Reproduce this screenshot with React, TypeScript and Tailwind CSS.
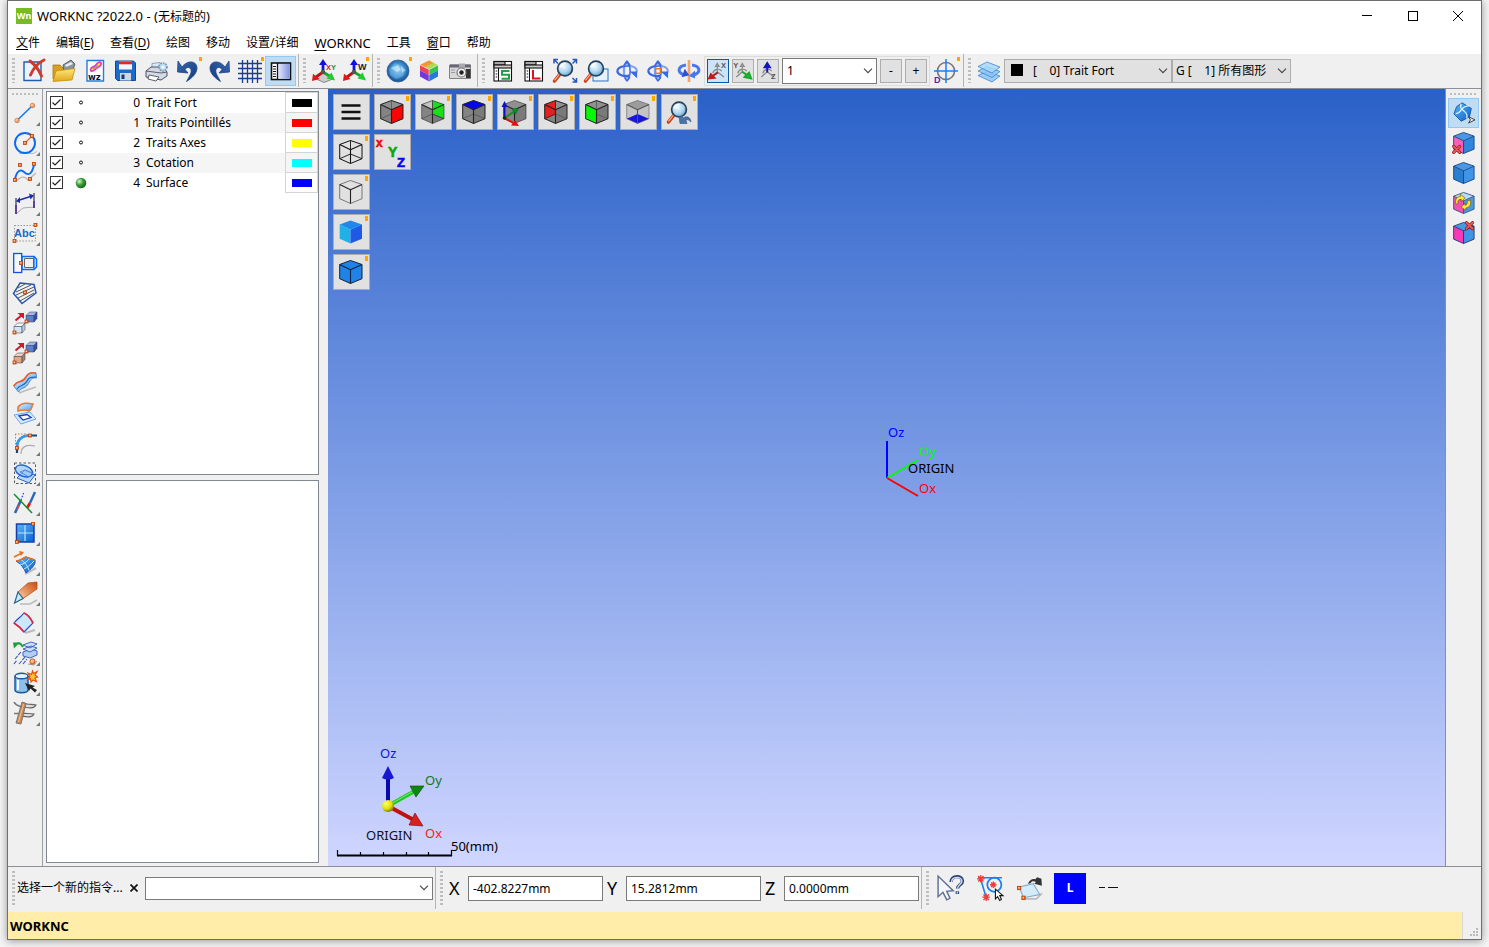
import React, { useState } from "react";

type Kids = { children?: React.ReactNode };

/* ---------- drawing helpers ---------- */

function Pic({ children, className = "size-6" }: Kids & { className?: string }) {
  return (
    <svg viewBox="0 0 24 24" className={`${className} shrink-0 overflow-visible`} fill="none" aria-hidden="true">
      {children}
    </svg>
  );
}

function Node({ x, y }: { x: number; y: number }) {
  return (
    <g>
      <rect x={x - 1.5} y={y - 1.5} width="3" height="3" fill="#f2671c" stroke="#b8440a" strokeWidth=".8" />
      <rect x={x - 0.8} y={y - 0.8} width="1.3" height="1.3" fill="#ffe0c0" />
    </g>
  );
}

function SharedPaints() {
  return (
    <svg className="absolute size-0" aria-hidden="true">
      <defs>
        <radialGradient id="lens" cx=".4" cy=".35" r=".7">
          <stop offset="0" stopColor="#f2fbff" />
          <stop offset=".6" stopColor="#a9d3ee" />
          <stop offset="1" stopColor="#5f97c4" />
        </radialGradient>
        <radialGradient id="globe" cx=".5" cy=".45" r=".6">
          <stop offset="0" stopColor="#a8d8f4" />
          <stop offset=".5" stopColor="#3f8fd0" />
          <stop offset="1" stopColor="#0c3c80" />
        </radialGradient>
        <linearGradient id="undo" x1="0" y1="0" x2="1" y2="1">
          <stop offset="0" stopColor="#3a68ac" />
          <stop offset="1" stopColor="#0f3a80" />
        </linearGradient>
        <linearGradient id="sky" x1="0" y1="0" x2="1" y2="1">
          <stop offset="0" stopColor="#e2f4ff" />
          <stop offset="1" stopColor="#4f9de4" />
        </linearGradient>
        <linearGradient id="deep" x1="0" y1="0" x2="1" y2="1">
          <stop offset="0" stopColor="#5ab8f5" />
          <stop offset="1" stopColor="#0f5fc8" />
        </linearGradient>
        <linearGradient id="gold" x1="0" y1="0" x2="0" y2="1">
          <stop offset="0" stopColor="#ffe680" />
          <stop offset="1" stopColor="#e0a91a" />
        </linearGradient>
        <linearGradient id="panel" x1="0" y1="0" x2="1" y2="0">
          <stop offset="0" stopColor="#e4eaff" />
          <stop offset="1" stopColor="#7f93e0" />
        </linearGradient>
        <linearGradient id="pencil" x1="0" y1="1" x2="1" y2="0">
          <stop offset="0" stopColor="#ffd0a8" />
          <stop offset="1" stopColor="#c8480c" />
        </linearGradient>
        <radialGradient id="ball" cx=".35" cy=".35" r=".7">
          <stop offset="0" stopColor="#d4f7cf" />
          <stop offset=".5" stopColor="#3a9c3a" />
          <stop offset="1" stopColor="#146414" />
        </radialGradient>
        <radialGradient id="yellowBall" cx=".35" cy=".3" r=".75">
          <stop offset="0" stopColor="#ffff70" />
          <stop offset=".6" stopColor="#e0e000" />
          <stop offset="1" stopColor="#707000" />
        </radialGradient>
        <radialGradient id="peach" cx=".35" cy=".35" r=".7">
          <stop offset="0" stopColor="#ffd8b8" />
          <stop offset="1" stopColor="#e07a38" />
        </radialGradient>
      </defs>
    </svg>
  );
}

const EDGE = {
  T: "11.5,.5",
  RT: "23,4.5",
  RB: "23,18.7",
  B: "11.5,23.5",
  LB: ".7,18.7",
  LT: ".7,4.5",
  C: "11.5,9.7",
  K: "11.5,14",
};

function Face({ p, fill, o = 1 }: { p: (keyof typeof EDGE)[]; fill: string; o?: number }) {
  return <polygon points={p.map((k) => EDGE[k]).join(" ")} fill={fill} fillOpacity={o} />;
}

function Wire({ color = "#222", hidden = false, soft = false }: { color?: string; hidden?: boolean; soft?: boolean }) {
  return (
    <g stroke={color} strokeWidth="1" strokeLinejoin="round">
      <path d="M11.5.5 23 4.5V18.7L11.5 23.5.7 18.7V4.5Z" strokeOpacity={soft ? 0.55 : 1} />
      <path d="M.7 4.5 11.5 9.7 23 4.5M11.5 9.7V23.5" strokeWidth="1.1" />
      {hidden && <path d="M11.5.5V14M.7 18.7 11.5 14 23 18.7" strokeWidth=".9" />}
    </g>
  );
}

const Magnifier = () => (
  <g>
    <path d="M7 15 1.5 22" stroke="#c8401c" strokeWidth="3.6" strokeLinecap="round" />
    <path d="M6.5 15 1.5 21.3" stroke="#ffb090" strokeWidth="1.2" />
    <circle cx="12" cy="9.5" r="7.4" fill="url(#lens)" stroke="#27405c" strokeWidth="1.7" />
    <path d="M7.5 8.5a5 5 0 0 1 5-4" stroke="#fff" strokeWidth="1.6" />
  </g>
);

const RedCross = ({ x, y }: { x: number; y: number }) => (
  <g strokeLinecap="round">
    <path d={`M${x - 3.3} ${y - 3.3}l6.6 6.6m0-6.6l-6.6 6.6`} stroke="#8c1a1a" strokeWidth="3.4" />
    <path d={`M${x - 3.3} ${y - 3.3}l6.6 6.6m0-6.6l-6.6 6.6`} stroke="#f05858" strokeWidth="2" />
  </g>
);

const Triad = () => (
  <g>
    <path d="M11 13V4" stroke="#1414d8" strokeWidth="2.8" />
    <path d="M7 6 11 0l4 6Z" fill="#1010e0" />
    <path d="M11 13 4 18" stroke="#c01414" strokeWidth="2.8" />
    <path d="M0 22 1 14.8 7.6 20Z" fill="#e01818" />
    <path d="M11 13l6.5 4" stroke="#18a828" strokeWidth="2.8" />
    <path d="M23 21.5 14.5 19.500 19.500 13.500Z" fill="#22cc30" />
    <circle cx="11" cy="13" r="2.2" fill="#555" />
  </g>
);

const Sheet = () => (
  <g>
    <rect x="3" y="2.5" width="17.5" height="19.5" fill="#fff" stroke="#111" strokeWidth="1.1" />
    <rect x="3" y="2.5" width="11" height="3.5" fill="#aaa" stroke="#111" strokeWidth="1.1" />
    <rect x="3" y="6" width="17.5" height="3" fill="#ccc" stroke="#111" strokeWidth="1.1" />
    <path d="M7.5 9V22" stroke="#111" />
    <path d="M4.700 12h1.500m-1.500 3h1.500m-1.500 3h1.500" stroke="#111" strokeWidth="1.200" />
  </g>
);

const Orbit = () => (
  <g>
    <path d="M12 1.500C7.500 6 7.500 18 12 22.500" stroke="#7ba2f4" strokeWidth="2.400" />
    <path d="M12 1.500C16.500 6 16.500 18 12 22.500" stroke="#4a74e8" strokeWidth="1.800" />
    <path d="M16 6.500C9 5.500 1.500 8 1.500 12s7 6.500 13 5" stroke="#3b68e0" strokeWidth="2.400" />
    <path d="M16 6.500c5 1 7.500 3.500 6.500 7" stroke="#7ba2f4" strokeWidth="2.200" />
    <path d="M8 5.500 12 0l4 5.500ZM15 12.500h8v7.500ZM8.500 19l3.500 5 4-5Z" fill="#3b68e0" />
    <path d="M12 3.500 9.500 6h4ZM12 21.500 10.500 19.500h3Z" fill="#9ab8fa" />
  </g>
);

const MiniAxis = ({ label, tone }: { label: string; tone: "x" | "y" | "z" }) => (
  <Pic className="size-[18px]">
    <g stroke="#888" strokeWidth="1.6">
      <path d="M11 13V4m0 9L3 20m8-7 9 7M5 15a7 7 0 0 1 12-3" />
      <path d="M8.500 6 11 2l2.500 4Z" fill="#aab" />
    </g>
    {tone === "x" && <path d="M12 14 6 18m1.500 3L0 22l2.500-6Z" stroke="#c01818" strokeWidth="2.4" fill="#d01818" />}
    {tone === "y" && <path d="M11 13l6 4m-3 3 9 2-3-8Z" stroke="#18a828" strokeWidth="2.4" fill="#18c828" />}
    {tone === "z" && <path d="M11 14V6M7.500 7 11 1.500 14.500 7Z" stroke="#1616c0" strokeWidth="2.6" fill="#1616c0" />}
    <text x={tone === "y" ? -1 : 16} y={tone === "z" ? 22 : 8} fontSize="10" fontWeight="700" fill="#555" fontFamily="Liberation Sans">
      {label}
    </text>
  </Pic>
);

const Undo = () => (
  <path
    d="M6 8C11 1 21 1 21 9.500 20.500 15 16 19 10.500 22.500 14 16 16.500 12.500 14.500 9.700 12.800 7.500 10.500 8.500 9 10.500L12 14 1.500 13 2 2Z"
    fill="url(#undo)"
    stroke="#1c4488"
    strokeWidth=".8"
    strokeLinejoin="round"
  />
);

const SmallBox = ({ x, y, a, b, c }: { x: number; y: number; a: string; b: string; c: string }) => (
  <g transform={`translate(${x} ${y})`} stroke="#3a3a50" strokeWidth=".5" strokeLinejoin="round">
    <path d="M0 4 3.500.5H11L8 4Z" fill={a} />
    <path d="M0 4h8v6.500H0Z" fill={b} />
    <path d="M8 4l3-3.500V7L8 10.500Z" fill={c} />
  </g>
);

/* ---------- main toolbar icons ---------- */

const fileIcons: { name: string; pic: React.ReactNode; mark?: boolean; on?: boolean }[] = [
  {
    name: "新建",
    pic: (
      <Pic>
        <path d="M3 3h17v18.500H3Z" fill="#e8f3ff" stroke="#1c5fb0" strokeWidth="1.400" />
        <path d="M9 2C13 5 18 11 20.500 17M23 1C17 4 12 10 9.500 16" stroke="#d03a28" strokeWidth="3" strokeLinecap="round" />
      </Pic>
    ),
  },
  {
    name: "打开",
    pic: (
      <Pic>
        <path d="M1 6h7l2 2.500h10V20H1Z" fill="#d8a020" stroke="#a87808" strokeWidth=".8" />
        <path d="M11 6 19 1l4 4-3 8-8 1Z" fill="#8a949c" stroke="#444c54" strokeWidth=".8" />
        <path d="M13 6l6-3 2 2-7 3Z" fill="#e8eef2" />
        <path d="M4 12 23 9.500 20 21 1 22.500Z" fill="url(#gold)" stroke="#c89010" strokeWidth=".8" />
      </Pic>
    ),
  },
  {
    name: "工作区",
    pic: (
      <Pic>
        <path d="M4 1.500h16.500V22H4Z" fill="#fff" stroke="#2a7ccc" strokeWidth="1.400" />
        <path d="M8 12C6 8 12 8 13 6s4-4 5-2-2 4-4 5-3 4-6 3Z" fill="#f4e838" stroke="#e040c0" strokeWidth="1.800" />
        <path d="M10 10l5-4" stroke="#999" strokeWidth="1.200" />
        <text x="5" y="20.500" fontSize="8.500" fontWeight="700" fill="#101030" fontFamily="DejaVu Sans">
          wz
        </text>
      </Pic>
    ),
  },
  {
    name: "保存",
    pic: (
      <Pic>
        <path d="M1.500 2h18l2 2v17.500h-18l-2-2Z" fill="#1d6ac8" stroke="#0e4a9c" />
        <path d="M5 2.500h13v8H5Z" fill="#f2f6fa" />
        <path d="M5 2.500h13v2.800H5Z" fill="#e02c20" />
        <path d="M6 14h11v7.500H6Z" fill="#cfd8e2" />
        <path d="M7.500 15.500h3V20h-3Z" fill="#123a78" />
      </Pic>
    ),
  },
  {
    name: "打印",
    pic: (
      <Pic>
        <path d="M7 9V4.500l8-1 1 6Z" fill="#d4ecff" stroke="#7890a8" strokeWidth=".8" />
        <path d="M1 12l5-4h12l4 5v4l-6 4-15-3Z" fill="#d4d9e4" stroke="#4a5064" strokeWidth="1" />
        <path d="M1 12l15 2 6-1" stroke="#4a5064" strokeWidth=".9" />
        <path d="M4 16l10 2-3 4-8-2Z" fill="#fff" stroke="#4a5064" strokeWidth=".9" />
        <circle cx="18" cy="8" r="4" fill="#b8dcf4" stroke="#8094a8" strokeWidth="1.700" strokeDasharray="1.600 1" />
        <circle cx="18" cy="8" r="1.500" fill="#fff" />
      </Pic>
    ),
  },
  { name: "撤销", mark: true, pic: <Pic><Undo /></Pic> },
  {
    name: "重做",
    pic: (
      <Pic>
        <g transform="translate(24 0) scale(-1 1)">
          <Undo />
        </g>
      </Pic>
    ),
  },
  {
    name: "网格",
    mark: true,
    pic: (
      <Pic>
        <path d="M4.500 1v23M9.500 1v23M14.500 1v23M19.500 1v23M0 4.500h24M0 9.500h24M0 14.500h24M0 19.500h24" stroke="#1c3c8c" strokeWidth="1.300" />
      </Pic>
    ),
  },
  {
    name: "面板",
    on: true,
    pic: (
      <Pic>
        <rect x="2.500" y="4" width="19" height="16.500" fill="#fff" stroke="#111" strokeWidth="1.600" />
        <rect x="9" y="5" width="11.700" height="14.700" fill="url(#panel)" />
        <path d="M8.500 4v16.500" stroke="#111" strokeWidth="1.300" />
        <path d="M4 7.500h3M4 10h3M4 12.500h3M4 15h3M4 17.500h3" stroke="#111" strokeWidth="1.100" />
      </Pic>
    ),
  },
];

const axisIcons = [
  {
    name: "XY 平面",
    pic: (
      <Pic>
        <path d="M11 14 2 19l10 4.500 10-4Z" fill="#ccc" stroke="#666" strokeWidth=".7" />
        <Triad />
        <text x="14" y="10.500" fontSize="7.500" fontWeight="700" fontFamily="Liberation Sans" fill="#c82020">
          X<tspan fill="#1a9030">Y</tspan>
        </text>
      </Pic>
    ),
  },
  {
    name: "工作坐标系",
    mark: true,
    pic: (
      <Pic>
        <Triad />
        <text x="15" y="10.500" fontSize="9" fontWeight="700" fontFamily="Liberation Sans" fill="#222">
          W
        </text>
      </Pic>
    ),
  },
];

const displayIcons = [
  {
    name: "渲染",
    mark: true,
    pic: (
      <Pic>
        <circle cx="12" cy="12" r="11" fill="url(#globe)" stroke="#3a6a94" strokeWidth=".8" />
        <path d="M3 10l6-6 5 2 6 5-3 6-7 3-6-4Z" fill="#7cc0ec" fillOpacity=".45" />
        <path d="M5 9l7-3 3 5-4 2ZM15 7l4 4-3 3Z" fill="#d4effc" fillOpacity=".65" />
      </Pic>
    ),
  },
  {
    name: "颜色",
    pic: (
      <Pic>
        <path d="M12 1.500 21 6 12 10.500 3 6Z" fill="#b8d84c" />
        <path d="M12 1.500 16.500 3.700 7.500 8.200 3 6Z" fill="#f09838" />
        <path d="M3 6l9 4.500V16L3 11.500Z" fill="#f04058" />
        <path d="M3 11.500 12 16v6.500L3 17.500Z" fill="#7038d8" />
        <path d="M12 10.500 21 6v5.500L12 16Z" fill="#30c850" />
        <path d="M12 16l9-4.500v6l-9 5Z" fill="#2878d8" />
        <path d="M3 6l9 4.500L21 6M12 10.500v12" stroke="#fff" strokeOpacity=".6" strokeWidth=".8" />
      </Pic>
    ),
  },
  {
    name: "截图",
    pic: (
      <Pic>
        <path d="M1.500 6h21v13.500h-21Z" fill="#d8d8d8" stroke="#777" strokeWidth=".9" />
        <path d="M2 5.500h20.500v3H2Z" fill="#667" />
        <path d="M11 4.500h6v4h-6Z" fill="#aaa" />
        <path d="M18 10h4.500v9H18Z" fill="#333" />
        <circle cx="13.500" cy="13.500" r="4.500" fill="#f0f0f0" stroke="#777" strokeWidth="1.200" />
        <circle cx="13.500" cy="13.500" r="2.200" fill="#222" />
        <path d="M3 11h4M3 13.500h4" stroke="#999" />
      </Pic>
    ),
  },
];

const viewIcons = [
  {
    name: "S 列表",
    pic: (
      <Pic>
        <Sheet />
        <path d="M18.500 12H11v3.700h7v4h-7.500" stroke="#20a048" strokeWidth="2" />
      </Pic>
    ),
  },
  {
    name: "L 列表",
    pic: (
      <Pic>
        <Sheet />
        <path d="M11 11v8.500h7.500" stroke="#e01020" strokeWidth="2" />
      </Pic>
    ),
  },
  {
    name: "全部缩放",
    pic: (
      <Pic>
        <Magnifier />
        <path d="M5 4.500 1 .5m0 4V.5h4M19.500 4.500l4-4m-4 0h4v4M19.500 19l4 4m-4 0h4v-4" stroke="#2858b8" strokeWidth="1.500" />
      </Pic>
    ),
  },
  {
    name: "窗口缩放",
    pic: (
      <Pic>
        <rect x="9" y="10" width="15" height="12" fill="#e4f2ff" stroke="#2c70c4" />
        <Magnifier />
      </Pic>
    ),
  },
  { name: "旋转", pic: <Pic className="size-[22px]"><Orbit /></Pic> },
  {
    name: "绕点旋转",
    pic: (
      <Pic className="size-[22px]">
        <Orbit />
        <rect x="9.500" y="9.500" width="5" height="5" fill="#fff" stroke="#f07818" strokeWidth="1.600" />
      </Pic>
    ),
  },
  {
    name: "绕轴旋转",
    pic: (
      <Pic>
        <path d="M12 1v22" stroke="#f4a468" strokeWidth="2.600" />
        <path d="M9 6C1 7 0 13 6 15.500M15 6c8 1 9 7 3 9.500l-4 1" stroke="#4a78ec" strokeWidth="3" />
        <path d="M6 10.500v9l6.500-4.500Z" fill="#2c50d0" transform="rotate(20 9 15)" />
        <path d="M18 11.500v8l-6-2.500Z" fill="#4a78ec" />
      </Pic>
    ),
  },
];

/* ---------- drawing palette (left) ---------- */

const drawTools: { name: string; art: React.ReactNode }[] = [
  {
    name: "直线",
    art: (
      <>
        <path d="M4 19.500 19.500 4.500" stroke="#1a78f0" strokeWidth="1.600" />
        <circle cx="4" cy="19.500" r="2.300" fill="url(#peach)" stroke="#c8703c" strokeWidth=".6" />
        <circle cx="19.500" cy="4.500" r="2.300" fill="url(#peach)" stroke="#c8703c" strokeWidth=".6" />
      </>
    ),
  },
  {
    name: "圆",
    art: (
      <>
        <path d="M6 22.500h14l4-2" stroke="#bbb" />
        <circle cx="12" cy="12" r="10" stroke="#0a6af0" strokeWidth="1.900" />
        <path d="M12 12l7-7" stroke="#e07030" strokeWidth="1.200" />
        <Node x={12} y={12} />
        <Node x={19} y={5} />
      </>
    ),
  },
  {
    name: "样条",
    art: (
      <>
        <path d="M3 20c6-5 9-5 12-1l8-7" stroke="#b8b8b8" strokeWidth="1.400" />
        <path d="M2 18C4 9 8 8 11 11s6 3 8-1 2-4 2-7" stroke="#0a6af0" strokeWidth="1.900" />
        <Node x={7} y={4} />
        <Node x={21} y={3} />
        <Node x={2} y={19} />
        <Node x={17} y={18} />
      </>
    ),
  },
  {
    name: "尺寸",
    art: (
      <>
        <path d="M3 23l7-6 11-1" stroke="#aaa" />
        <path d="M3 7v7M21 2v8" stroke="#444" strokeWidth="1.300" />
        <path d="M3 14v9M21 10v7" stroke="#4a2090" strokeWidth="1.700" />
        <path d="M5 9.500 19 5" stroke="#1c2cb0" strokeWidth="1.500" />
        <path d="M3 10.200 7 6v6ZM21 4.500 16 2.500l1.500 6Z" fill="#1c2cb0" />
      </>
    ),
  },
  {
    name: "文字",
    art: (
      <>
        <rect x="1.500" y="4.500" width="21" height="15.500" stroke="#999" strokeDasharray="1.500 1.500" />
        <text x="1" y="16" fontSize="11" fontWeight="700" fill="#1668c8" fontFamily="Liberation Sans">
          Abc
        </text>
        <Node x={22.500} y={4} />
        <Node x={1.500} y={20} />
      </>
    ),
  },
  {
    name: "轮廓",
    art: (
      <>
        <rect x=".7" y="2.500" width="8" height="19" fill="#f4f8ff" stroke="#0a54e0" strokeWidth="1.300" />
        <path d="M9 5.500h12l2.500 2.500v8l-2.500 2.500H9Z" stroke="#0a6af0" strokeWidth="1.500" />
        <path d="M11.500 7.500h9v9h-9Z" stroke="#666" />
        <path d="M21 5.500v13" stroke="#0a6af0" strokeWidth="1.300" />
        <Node x={8} y={12} />
      </>
    ),
  },
  {
    name: "剖面线",
    art: (
      <>
        <path d="M7 2l14 1.500 2 8.500L9 22.500.5 12.500Z" fill="#f2f2f2" stroke="#2458b8" strokeWidth="1.500" />
        <path d="M5 7 12 3M3 11 18 4M3 14l18-8M5 17l16-8M7 20l14-8" stroke="#444" strokeWidth=".9" />
        <Node x={12} y={11.500} />
      </>
    ),
  },
  {
    name: "移动",
    art: (
      <>
        <path d="M2.500 9.500 9 4" stroke="#c81c30" strokeWidth="2.200" />
        <path d="M4.500 2H11v6Z" fill="#c81c30" />
        <SmallBox x={13} y={.5} a="#a0b8ec" b="#5a80d0" c="#3050a8" />
        <SmallBox x={1} y={11.500} a="#eef4fa" b="#d4e4f2" c="#c0c8d4" />
        <Node x={13.500} y={10.500} />
        <Node x={1.500} y={21.500} />
      </>
    ),
  },
  {
    name: "复制",
    art: (
      <>
        <path d="M2.500 9.500 9 4" stroke="#c81c30" strokeWidth="2.200" />
        <path d="M4.500 2H11v6Z" fill="#c81c30" />
        <SmallBox x={13} y={.5} a="#a0b8ec" b="#5a80d0" c="#3050a8" />
        <SmallBox x={1} y={11.500} a="#f4d0b8" b="#dca888" c="#a88068" />
        <Node x={13.500} y={10.500} />
        <Node x={1.500} y={21.500} />
      </>
    ),
  },
  {
    name: "放样面",
    art: (
      <>
        <path d="M6 22l8-3 9-3" stroke="#bbb" strokeWidth="1.500" />
        <path d="M.7 15C5 8 9 13 13 6c2-4 5-5 10-4l.5 5c-6-1-6 3-9 7s-6 2-9 7Z" fill="url(#sky)" stroke="#2478cc" strokeWidth=".8" />
        <path d="M.7 15C5 8 9 13 13 6c2-4 5-5 10-4" stroke="#e8602c" strokeWidth="1.600" />
        <path d="M4 18c3-5 7-2 10-8 2-4 4-4 9-4" stroke="#1c5fb8" strokeWidth="1.200" />
      </>
    ),
  },
  {
    name: "偏置",
    art: (
      <>
        <path d="M1 14l16-3 6 7-15 5Z" fill="#d4ebff" stroke="#6aa8e0" />
        <path d="M6 15l8-1.500 4 3L10 19Z" fill="#fff" stroke="#1c3cc0" strokeWidth="1.300" />
        <path d="M5 6c4-5 10-4 15-3-2 4-1 6-4 7-4-2-7-1-11 0Z" fill="url(#sky)" stroke="#e87830" strokeWidth="1.600" />
      </>
    ),
  },
  {
    name: "圆角",
    art: (
      <>
        <path d="M2 3h12M2.500 3v13" stroke="#e87830" strokeWidth="1" strokeDasharray="1.500 1.500" />
        <path d="M8 23c0-7 5-10 14-8" stroke="#aaa" strokeWidth="1.200" />
        <path d="M4 22v-6C4 9 9 4.500 16 4.500h8" stroke="#164878" strokeWidth="2.200" />
        <path d="M4 16C4 9 9 4.500 16 4.500" stroke="#3a98ec" strokeWidth="2.400" />
        <Node x={17} y={4.500} />
        <Node x={4} y={17} />
      </>
    ),
  },
  {
    name: "选择区域",
    art: (
      <>
        <rect x="1.500" y="2" width="21" height="20.500" stroke="#555" strokeDasharray="2.500 2" />
        <path d="M4 17l8-8 10 5-6 8Z" fill="#b8daf4" stroke="#2860c8" />
        <ellipse cx="11" cy="10" rx="9" ry="5.500" transform="rotate(20 11 10)" fill="#8cc4f0" fillOpacity=".6" stroke="#2060d0" strokeWidth="1.400" />
        <path d="M7 11l5-2 8 3-4 4Z" stroke="#4078d0" strokeWidth=".8" />
      </>
    ),
  },
  {
    name: "修剪",
    art: (
      <>
        <path d="M2 22 8 9" stroke="#2868b8" strokeWidth="2.600" />
        <path d="M8 9l3-8" stroke="#2840f0" strokeDasharray="1.500 1.500" strokeWidth="1.200" />
        <path d="M4 19l2-5" stroke="#e04848" strokeWidth="1.500" />
        <path d="M14 17l3-5" stroke="#e01818" strokeWidth="2.800" />
        <path d="M17 12l5-11" stroke="#2868b8" strokeWidth="2.400" />
        <path d="M1 3l18 19" stroke="#18902c" strokeWidth="1.500" />
      </>
    ),
  },
  {
    name: "曲面",
    art: (
      <>
        <rect x="3.500" y="3" width="17.500" height="18" fill="url(#deep)" stroke="#1840a8" strokeWidth="1.500" />
        <path d="M12 4v16M5 12h15" stroke="#b8e4ff" strokeWidth="1.200" />
        <Node x={20} y={3} />
        <Node x={4} y={21} />
      </>
    ),
  },
  {
    name: "拉伸面",
    art: (
      <>
        <path d="M12 23l11-6" stroke="#bbb" strokeWidth="2" />
        <path d="M3 10c4 0 7-3 10-4l9 3c1 5-4 9-9 13-2-5-5-9-10-12Z" fill="url(#deep)" stroke="#1850b0" />
        <path d="M8 8.500c4 3 7 7 8 11M7 14c4-1 8-4 10-7M11 18c4-2 7-5 10-8" stroke="#c0e6ff" />
        <path d="M1 6 8 2.500M3 10c4 0 7-3 10-4l9 3" stroke="#e87020" strokeWidth="1.600" />
        <path d="M6 0l5 1-3 4Z" fill="#e87020" />
      </>
    ),
  },
  {
    name: "铣削",
    art: (
      <>
        <path d="M7 23h10l7-4" stroke="#bbb" strokeWidth="1.500" />
        <path d="M5 11 15 2l9-1v7L10 17.500Z" fill="url(#pencil)" stroke="#b85018" strokeWidth=".8" />
        <path d="M5 11l5 6.500L1.500 22Z" fill="#c4ecf8" stroke="#2c6488" strokeWidth="1.200" />
      </>
    ),
  },
  {
    name: "补面",
    art: (
      <>
        <path d="M12 22l10-3" stroke="#bbb" strokeWidth="2" />
        <path d="M11 2c5 2 7 6 9 10l-9 9C8 17 4 14 1 12 4 8 8 6 11 2Z" fill="#cde8fb" stroke="#1c50d0" strokeWidth="1.200" />
        <path d="M11 2c5 2 7 6 9 10M1 12c3 2 7 5 10 9" stroke="#e02840" strokeWidth="1.700" />
      </>
    ),
  },
  {
    name: "转换图层",
    art: (
      <>
        <path d="M2 18l6-7M1 23l3-4m2 4 7-8m-3 8 4-5" stroke="#3858c8" strokeWidth="1.100" strokeDasharray="4 1" />
        <path d="M10 11l8-3 6 2v4l-7 3-7-2Z" fill="#b4ccf4" stroke="#3058c0" strokeWidth=".9" />
        <path d="M10 8l8-3 6 2-7 4ZM10 4l8-3 6 2-7 4Z" fill="#cfe0fc" stroke="#3058c0" strokeWidth=".9" />
        <path d="M10 6C7 1 5 2 4 3" stroke="#18a038" strokeWidth="2" />
        <path d="M0 1.500 6.500 1.500 1 7.500Z" fill="#18a038" />
        <path d="M15 23l6 1 3-4" stroke="#999" />
        <circle cx="19.500" cy="20.500" r="2.600" fill="url(#peach)" stroke="#c85c18" />
      </>
    ),
  },
  {
    name: "实体",
    art: (
      <>
        <path d="M2 5v14c0 3.500 13 3.500 13 0V5" fill="#8cc0ec" stroke="#1c5898" strokeWidth="1.500" />
        <ellipse cx="8.500" cy="5" rx="6.500" ry="2.700" fill="#e2f4ff" stroke="#1c5898" strokeWidth="1.400" />
        <path d="M5 9v10" stroke="#fff" strokeWidth="1.800" />
        <path d="M19.500 0l1 2.500L24 .5 22 4l2.500 2L22 7l1.500 3.500L20 9l-2 2-.5-3-3 .5L17 6l-2-4 3.500 1.500Z" fill="#f8c830" stroke="#e85010" strokeWidth="1.200" />
        <path d="M12 12l10 3-2.500 1.500L24 19l-2 2.500-4.500-4L16 20Z" fill="#222" />
      </>
    ),
  },
  {
    name: "测量",
    art: (
      <>
        <path d="M11 2c3 2 8 1 12 2-2 4-7 3-12 2M9 12c4 1 8 0 12 1-2 4-7 3-13 2" fill="#ddd" stroke="#666" strokeWidth="1.200" />
        <path d="M9 1l4 1.500-5 20.500-5-1Z" fill="#c88858" stroke="#666" strokeWidth=".8" />
        <path d="M10.500 3 5.500 21" stroke="#f4c898" />
        <path d="M1 1c2 4 5 4 8 5M1 12.500h5" stroke="#777" strokeWidth="1.600" />
      </>
    ),
  },
];

const faceTools = [
  {
    name: "选择曲面",
    on: true,
    art: (
      <>
        <path d="M10 1 20 7l-2 9-9 5L1 13l3-8Z" fill="url(#deep)" stroke="#1458a8" />
        <path d="M3 13c8-1 3-8 15-9M9 2c-4 8 9 7 6 16" stroke="#d8f2ff" strokeWidth="1.500" />
        <path d="M17 16l7 3.500-7 3.500 2-3.500Z" fill="#eee" stroke="#333" />
      </>
    ),
  },
  {
    name: "删除面",
    art: (
      <>
        <Face p={["T", "RT", "C", "LT"]} fill="#4a98e4" />
        <Face p={["LT", "C", "B", "LB"]} fill="#f860b8" />
        <Face p={["C", "RT", "RB", "B"]} fill="#2f86dc" />
        <Wire color="#1c4888" />
        <RedCross x={4} y={19} />
      </>
    ),
  },
  {
    name: "实体面",
    art: (
      <>
        <Face p={["T", "RT", "C", "LT"]} fill="#4a98e4" />
        <Face p={["LT", "C", "B", "LB"]} fill="#2a7ed0" />
        <Face p={["C", "RT", "RB", "B"]} fill="#3f94e6" />
        <Wire color="#1c4888" />
      </>
    ),
  },
  {
    name: "翻转面",
    art: (
      <>
        <Face p={["T", "RT", "C", "LT"]} fill="#b8dcf8" />
        <Face p={["LT", "C", "B", "LB"]} fill="#f050b0" />
        <Face p={["C", "RT", "RB", "B"]} fill="#4a98e4" />
        <Wire color="#385888" />
        <g stroke="#6c5800" strokeWidth=".7" fill="#ffe838">
          <path d="M3 13c-1-6 2-8 5-8V2.500l5 4-4 4V8c-3 0-4 1-3.500 5Z" />
          <path d="M19 9c1 5-1 8-5 8.500V20l-5-3.500 4-4.500v2.500c2 0 3-2 2.500-5Z" />
        </g>
      </>
    ),
  },
  {
    name: "移除颜色",
    art: (
      <>
        <Face p={["T", "RT", "C", "LT"]} fill="#4a98e4" />
        <Face p={["LT", "C", "B", "LB"]} fill="#f838b8" />
        <Face p={["C", "RT", "RB", "B"]} fill="#3f94e6" />
        <Wire color="#1c4070" />
        <RedCross x={18} y={4} />
      </>
    ),
  },
];

/* ---------- floating view buttons ---------- */

const GrayCube = ({ hidden = true }: { hidden?: boolean }) => (
  <>
    <Face p={["T", "RT", "C", "LT"]} fill="#909090" />
    <Face p={["LT", "C", "B", "LB"]} fill="#848484" />
    <Face p={["C", "RT", "RB", "B"]} fill="#7a7a7a" />
    {hidden && <path d="M11.500.5V14M.7 18.700 11.500 14 23 18.700" stroke="#555" strokeWidth=".8" />}
  </>
);

const viewRow = [
  {
    name: "菜单",
    mark: false,
    art: <path d="M2.500 5.500h19M2.500 12h19M2.500 18.500h19" stroke="#111" strokeWidth="2.600" />,
  },
  { name: "右视图", mark: true, art: <><GrayCube /><Face p={["C", "RT", "RB", "B"]} fill="#fa0505" /><Wire /></> },
  {
    name: "后视图",
    mark: true,
    art: (
      <>
        <GrayCube />
        <Face p={["T", "C", "LT"]} fill="#c4c4c4" />
        <Face p={["T", "RT", "RB", "K"]} fill="#18e018" />
        <Wire soft />
        <path d="M11.500.5V14L23 18.700" stroke="#333" strokeWidth=".8" />
      </>
    ),
  },
  { name: "俯视图", mark: true, art: <><GrayCube /><Face p={["T", "RT", "C", "LT"]} fill="#0505f0" /><Wire /></> },
  {
    name: "等轴测",
    mark: true,
    art: (
      <>
        <GrayCube hidden={false} />
        <Wire soft />
        <path d="M1.500 18V5" stroke="#1010d0" strokeWidth="2" />
        <path d="M-1.500 7 1.500 1l3 6Z" fill="#1010d0" />
        <path d="M1.500 18 12 11" stroke="#109018" strokeWidth="2" />
        <path d="M15.500 8.500 12.500 14 9 9Z" fill="#109018" stroke="#063" strokeWidth=".6" />
        <path d="M1.500 18l9 5" stroke="#e01010" strokeWidth="2" />
        <path d="M16 26l-8-.5 4-5.500Z" fill="#e01010" />
        <circle cx="1.500" cy="18" r="1.800" fill="#222" />
      </>
    ),
  },
  {
    name: "左视图",
    mark: true,
    art: <><GrayCube /><Face p={["T", "K", "LB", "LT"]} fill="#ee1515" o={0.9} /><Wire /><path d="M11.500.5V14L.7 18.700" stroke="#511" strokeWidth=".8" /></>,
  },
  { name: "前视图", mark: true, art: <><GrayCube /><Face p={["LT", "C", "B", "LB"]} fill="#05f805" /><Wire /></> },
  {
    name: "仰视图",
    mark: true,
    art: (
      <>
        <Face p={["T", "RT", "RB", "B", "LB", "LT"]} fill="#c4c4c4" />
        <Face p={["T", "RT", "C", "LT"]} fill="#9c9c9c" />
        <Face p={["K", "RB", "B", "LB"]} fill="#1515e0" />
        <Wire color="#555" soft />
      </>
    ),
  },
  {
    name: "上一视图",
    mark: true,
    art: (
      <>
        <Magnifier />
        <path d="M12 16.500h3l1.500 1.500c3-2.500 7-1 7.500 4-3-3-4-2.500-5-1.500l1 3h-7Z" fill="#4a74a8" stroke="#2c5488" strokeWidth=".6" />
      </>
    ),
  },
];

const styleRows = [
  { name: "线框", art: <Wire hidden color="#111" /> },
  { name: "消隐", art: <Wire soft color="#222" /> },
  {
    name: "着色",
    art: (
      <>
        <Face p={["T", "RT", "C", "LT"]} fill="#2088e8" />
        <Face p={["LT", "C", "B", "LB"]} fill="#20b0e8" />
        <Face p={["C", "RT", "RB", "B"]} fill="#2058e8" />
      </>
    ),
  },
  {
    name: "着色带边",
    art: (
      <>
        <Face p={["T", "RT", "RB", "B", "LB", "LT"]} fill="#2082e6" />
        <Wire color="#0c2440" />
      </>
    ),
  },
];

/* ---------- controls ---------- */

function Grip({ vertical = true }: { vertical?: boolean }) {
  return vertical ? (
    <span className="w-[9px] shrink-0 self-stretch py-1 pl-1">
      <span className="block h-full w-[3px] bg-[repeating-linear-gradient(to_bottom,#bdbdbd_0px,#bdbdbd_2px,transparent_2px,transparent_4px)]" />
    </span>
  ) : (
    <span className="flex h-[9px] w-full shrink-0 items-center justify-center">
      <span className="h-[2px] w-[27px] bg-[repeating-linear-gradient(to_right,#bdbdbd_0px,#bdbdbd_2px,transparent_2px,transparent_4px)]" />
    </span>
  );
}

const Mark = () => <span className="absolute top-[1px] right-[1px] h-[5px] w-[3px] bg-[#ffa500]" />;

function ToolButton({ name, children, mark, on }: Kids & { name: string; mark?: boolean; on?: boolean }) {
  return (
    <button
      aria-label={name}
      className={`relative flex h-[30px] w-[31px] shrink-0 items-center justify-center border ${
        on ? "border-[#90c8f6] bg-[#c0dcf3]" : "border-transparent hover:bg-[#e5f1fb]"
      }`}
    >
      {children}
      {mark && <span className="absolute top-0 right-0 h-1 w-[3px] bg-[#ffa500]" />}
    </button>
  );
}

function Group({ children, last }: Kids & { last?: boolean }) {
  return (
    <div role="toolbar" className={`flex shrink-0 items-center ${last ? "" : "border-r border-[#b4b4b4] pr-[2px]"}`}>
      <Grip />
      {children}
    </div>
  );
}

const Chevron = () => (
  <svg viewBox="0 0 10 6" className="pointer-events-none absolute top-1/2 right-1 h-[6px] w-[10px] -translate-y-1/2" fill="none" aria-hidden="true">
    <path d="M1 .7 5 4.700 9 .7" stroke="#444" strokeWidth="1.100" />
  </svg>
);

function Picker({ label, options, look, swatch }: { label: string; options: string[]; look: string; swatch?: boolean }) {
  return (
    <div className="relative shrink-0">
      <select aria-label={label} className={`block appearance-none border text-black outline-none ${look}`}>
        {options.map((o) => (
          <option key={o}>{o}</option>
        ))}
      </select>
      {swatch && <span className="pointer-events-none absolute top-[5px] left-[7px] size-3 bg-black" />}
      <Chevron />
    </div>
  );
}

const AxisToggle = ({ label, tone, on }: { label: string; tone: "x" | "y" | "z"; on?: boolean }) => (
  <button
    aria-label={`${label} 轴`}
    className={`flex h-6 w-[22px] items-center justify-center border ${on ? "border-[#0a5a9c] bg-[#cce4f7]" : "border-[#adadad] bg-[#e1e1e1]"}`}
  >
    <MiniAxis label={label} tone={tone} />
  </button>
);

const StepButton = ({ sign }: { sign: string }) => (
  <button className="flex h-6 w-[22px] items-center justify-center border border-[#adadad] bg-[#e1e1e1]">{sign}</button>
);

function TitleBar() {
  return (
    <header className="flex h-[30px] shrink-0 items-center bg-white pl-2">
      <span className="flex size-4 items-center justify-center bg-[#78bc1e] text-[9px] font-bold text-white">Wn</span>
      <h1 className="ml-[5px] flex-1">
        <span className="text-[13px]">WORKNC ?2022.0 - (</span>无标题的<span className="text-[13px]">)</span>
      </h1>
      <button aria-label="最小化" className="flex h-full w-[46px] items-center justify-center">
        <svg viewBox="0 0 10 10" className="size-[10px]" aria-hidden="true"><path d="M0 4.500h10" stroke="#000" /></svg>
      </button>
      <button aria-label="最大化" className="flex h-full w-[45px] items-center justify-center">
        <svg viewBox="0 0 10 10" className="size-[10px]" aria-hidden="true"><rect x=".5" y=".5" width="9" height="9" fill="none" stroke="#000" /></svg>
      </button>
      <button aria-label="关闭" className="flex h-full w-[46px] items-center justify-center">
        <svg viewBox="0 0 10 10" className="size-[10px]" aria-hidden="true"><path d="M0 0l10 10M10 0 0 10" stroke="#000" /></svg>
      </button>
    </header>
  );
}

function MenuBar() {
  return (
    <nav className="flex h-[23px] shrink-0 items-center gap-4 bg-white px-2 [&_u]:underline-offset-2">
      <button><u>文</u>件</button>
      <button>编辑(<u>E</u>)</button>
      <button>查看(<u>D</u>)</button>
      <button>绘图</button>
      <button>移动</button>
      <button>设置/详细</button>
      <button className="text-[13px]"><u>W</u>ORKNC</button>
      <button>工具</button>
      <button><u>窗</u>口</button>
      <button>帮助</button>
    </nav>
  );
}

function MainToolbar() {
  return (
    <div className="flex h-[34px] shrink-0 bg-[#f0f0f0] pb-px">
      <Group>
        {fileIcons.map((i) => (
          <ToolButton key={i.name} name={i.name} mark={i.mark} on={i.on}>{i.pic}</ToolButton>
        ))}
      </Group>
      <Group>
        {axisIcons.map((i) => (
          <ToolButton key={i.name} name={i.name} mark={i.mark}>{i.pic}</ToolButton>
        ))}
      </Group>
      <Group>
        {displayIcons.map((i) => (
          <ToolButton key={i.name} name={i.name} mark={i.mark}>{i.pic}</ToolButton>
        ))}
      </Group>
      <Group>
        {viewIcons.map((i) => (
          <ToolButton key={i.name} name={i.name}>{i.pic}</ToolButton>
        ))}
        <div className="flex items-center gap-[3px] border border-[#dcdcdc] px-[2px] py-px">
          <AxisToggle label="X" tone="x" on />
          <AxisToggle label="Y" tone="y" />
          <AxisToggle label="Z" tone="z" />
          <Picker label="步长" options={["1", "5", "10"]} look="h-[26px] w-[95px] border-[#7a7a7a] bg-white pl-1" />
          <StepButton sign="-" />
          <StepButton sign="+" />
        </div>
        <ToolButton name="目标" mark>
          <Pic>
            <circle cx="12" cy="12" r="8.500" stroke="#777" strokeWidth="1.600" />
            <path d="M12 0v24M0 12h24" stroke="#1a80f8" strokeWidth="1.500" />
            <text x="0" y="23.500" fontSize="9" fontWeight="700" fill="#6020a8" fontFamily="Liberation Sans">D</text>
          </Pic>
        </ToolButton>
      </Group>
      <Group last>
        <ToolButton name="图层">
          <Pic>
            <g fill="#8cc4f4" stroke="#3c88d0" strokeWidth=".8" fillOpacity=".85">
              <path d="M1 16.500 10 12l13 5-8 6Z" />
              <path d="M1 12 10 7.500l13 5-8 6Z" />
              <path d="M1 7.500 10 3l13 5-8 6Z" fill="#a8d8fa" />
            </g>
          </Pic>
        </ToolButton>
        <Picker
          label="当前图层"
          options={["[\u00a0\u00a0\u00a0 0] Trait Fort", "[\u00a0\u00a0\u00a0 4] Surface"]}
          look="h-6 w-[168px] border-[#adadad] bg-[#e1e1e1] pl-7"
          swatch
        />
        <Picker
          label="图形组"
          options={["G [\u00a0\u00a0\u00a0 1] 所有图形"]}
          look="h-6 w-[119px] border-[#adadad] bg-[#e1e1e1] pl-[3px]"
        />
      </Group>
    </div>
  );
}

const initialLayers = [
  { id: 0, name: "Trait Fort", paint: "bg-black" },
  { id: 1, name: "Traits Pointillés", paint: "bg-[#ff0000]" },
  { id: 2, name: "Traits Axes", paint: "bg-[#ffff00]" },
  { id: 3, name: "Cotation", paint: "bg-[#00ffff]" },
  { id: 4, name: "Surface", paint: "bg-[#0000ff]" },
];

function LayerList() {
  const [shown, setShown] = useState<boolean[]>([true, true, true, true, true]);
  return (
    <table className="w-full table-fixed border-collapse">
      <tbody>
        {initialLayers.map((l, i) => (
          <tr key={l.id} className="h-5 even:bg-[#f5f5f5]">
            <td className="w-6 p-0">
              <span className="relative ml-[3px] block size-[13px]">
                <input
                  type="checkbox"
                  id={`layer-${l.id}`}
                  checked={shown[i]}
                  onChange={() => setShown(shown.map((s, n) => (n === i ? !s : s)))}
                  className="peer block size-[13px] appearance-none border border-[#333] bg-white"
                />
                <svg viewBox="0 0 13 13" className="pointer-events-none absolute inset-0 hidden size-[13px] peer-checked:block" fill="none" aria-hidden="true">
                  <path d="M2.500 6.500 5 9 10.500 3.500" stroke="#222" strokeWidth="1.200" />
                </svg>
              </span>
            </td>
            <td className="w-5 p-0">
              <svg viewBox="0 0 12 12" className="mx-auto size-3" fill="none" aria-hidden="true">
                {l.id === 4 ? <circle cx="6" cy="6" r="5.300" fill="url(#ball)" /> : <circle cx="6" cy="5.500" r="1.500" stroke="#111" strokeWidth="1" />}
              </svg>
            </td>
            <td className="w-[49px] p-0 text-right">{l.id}</td>
            <td className="p-0 pl-[6px]">
              <label htmlFor={`layer-${l.id}`}>{l.name}</label>
            </td>
            <td className="w-8 border border-[#d4d4d4] p-0">
              <span className={`mx-auto block h-2 w-5 ${l.paint}`} />
            </td>
          </tr>
        ))}
      </tbody>
    </table>
  );
}

function ViewButton({ name, mark, children, flush }: Kids & { name: string; mark?: boolean; flush?: boolean }) {
  return (
    <button
      aria-label={name}
      className={`relative flex h-9 w-[37px] items-center justify-center border border-[#adadad] bg-[#e1e1e1] ${flush ? "" : "pr-[2px]"}`}
    >
      {children}
      {mark && <Mark />}
    </button>
  );
}

function Viewport() {
  return (
    <main className="relative min-w-0 flex-1 overflow-hidden bg-linear-to-b from-[#2961c8] to-[#d0d6ff] p-[5px]">
      <div className="flex flex-col gap-1">
        <div className="flex gap-1">
          {viewRow.map((v) => (
            <ViewButton key={v.name} name={v.name} mark={v.mark}><Pic>{v.art}</Pic></ViewButton>
          ))}
        </div>
        {styleRows.map((s, i) => (
          <div key={s.name} className="flex gap-1">
            <ViewButton name={s.name} mark><Pic>{s.art}</Pic></ViewButton>
            {i === 0 && (
              <ViewButton name="坐标" flush>
                <svg viewBox="0 0 35 34" className="h-[34px] w-[35px]" fontWeight="700" aria-hidden="true">
                  <text x="1" y="12" fontSize="11" fill="#f00505" fontFamily="Liberation Mono, monospace" stroke="#f00505" strokeWidth=".6">X</text>
                  <text x="13" y="22" fontSize="14" fill="#0aa80a" fontFamily="Liberation Sans" stroke="#0aa80a" strokeWidth=".6">Y</text>
                  <text x="22" y="32" fontSize="13" fill="#0505f0" fontFamily="Liberation Sans" stroke="#0505f0" strokeWidth=".6">Z</text>
                </svg>
              </ViewButton>
            )}
          </div>
        ))}
      </div>

      {/* model origin, kept at the centre of the scene */}
      <svg viewBox="-50 -60 100 120" className="absolute top-1/2 left-1/2 h-[120px] w-[100px] -translate-1/2 overflow-visible text-[13px]" fill="none" aria-label="ORIGIN">
        <path d="M0 0V-37" stroke="#0000ff" strokeWidth="2" />
        <path d="M0 0 31-18" stroke="#00ff00" strokeWidth="2" />
        <path d="M0 0 31 18" stroke="#ff0000" strokeWidth="2" />
        <text x="1" y="-41" fill="#0000ff">Oz</text>
        <text x="32" y="-22" fill="#00ff00">Oy</text>
        <text x="32" y="15" fill="#ff0000">Ox</text>
        <text x="21" y="-5" fill="#000">ORIGIN</text>
      </svg>

      {/* orientation triad and scale bar */}
      <svg viewBox="0 -10 180 130" className="absolute bottom-0 left-0 h-[130px] w-[180px] text-[13px]" fill="none" aria-label="50(mm)">
        <path d="M60 60V32" stroke="#0808b0" strokeWidth="4" />
        <path d="M54 32 60 20l6 12q-6 3-12 0Z" fill="#1818d0" />
        <path d="M60 60 85 46" stroke="#20c820" strokeWidth="4" />
        <path d="M59 60 84 46" stroke="#70f070" strokeWidth="1" />
        <path d="M82 40 96 40 88 51Z" fill="#108810" stroke="#064806" strokeWidth=".6" />
        <path d="M60 60 84 73" stroke="#c01010" strokeWidth="4" />
        <path d="M87 67 95 80 81 79Z" fill="#d82020" stroke="#700808" strokeWidth=".6" />
        <circle cx="60" cy="60" r="6" fill="url(#yellowBall)" />
        <text x="52" y="12" fill="#1010e0">Oz</text>
        <text x="97" y="39" fill="#107820">Oy</text>
        <text x="97" y="92" fill="#ff2020">Ox</text>
        <text x="38" y="94" fill="#10101c">ORIGIN</text>
        <path d="M9.500 104v5.500H123.500V104M32.500 106v3M55.500 106v3M78.500 106v3M100.500 106v3" stroke="#000" strokeWidth="1.200" />
        <path d="M9 109.500h115" stroke="#000" strokeWidth="2" />
        <text x="123" y="105" fill="#000">50(mm)</text>
      </svg>
    </main>
  );
}

const coords = [
  { axis: "X", value: "-402.8227mm" },
  { axis: "Y", value: "15.2812mm" },
  { axis: "Z", value: "0.0000mm" },
];

function CommandBar() {
  return (
    <div className="flex h-[45px] shrink-0 bg-[#f0f0f0] pb-[3px]">
      <Group>
        <label htmlFor="command" className="w-[107px]">选择一个新的指令...</label>
        <button aria-label="取消" className="mx-[3px] flex size-[13px] items-center justify-center">
          <svg viewBox="0 0 8 8" className="size-2" aria-hidden="true"><path d="M.5.5l7 7m0-7-7 7" stroke="#111" strokeWidth="1.700" /></svg>
        </button>
        <div className="relative ml-[2px] flex items-center">
          <select id="command" className="h-[23px] w-[288px] appearance-none border border-[#7a7a7a] bg-white outline-none">
            <option aria-label="空"></option>
          </select>
          <Chevron />
        </div>
      </Group>
      <Group>
        <div className="flex items-center">
          {coords.map((c) => (
            <div key={c.axis} className="flex items-center">
              <label htmlFor={`axis-${c.axis}`} className="w-[23px] pl-1 text-[18px]">{c.axis}</label>
              <input
                id={`axis-${c.axis}`}
                defaultValue={c.value}
                className="h-[25px] w-[135px] border border-[#7a7a7a] bg-white px-1 outline-none"
              />
            </div>
          ))}
        </div>
      </Group>
      <Group last>
        <div className="flex items-center gap-2 pl-[3px]">
          <button aria-label="这是什么" className="flex size-8 items-center justify-center">
            <Pic className="size-[26px]">
              <path d="M1 1v19l4.500-4 3.500 7 3-1.500L9 15l6-.5Z" fill="#f4f6fc" stroke="#5c6c94" strokeWidth="1.300" />
              <path d="M13 6.500C13 0 23.500 0 23.500 5.500 23.500 9 19 9 19 12.500M18.800 15v2.500" stroke="#2c4474" strokeWidth="3.200" />
              <path d="M13.500 6.500C13.500 1 23 1 23 5.500 23 8.500 19 9 19 12.500M18.800 15.500v1.500" stroke="#cfdcf4" strokeWidth="1.300" />
            </Pic>
          </button>
          <button aria-label="捕捉点" className="flex size-8 items-center justify-center">
            <Pic className="size-[26px]">
              <path d="M1 2.500h22M3 2.500l6 20" stroke="#1a80f0" strokeWidth="1.500" />
              <circle cx="16" cy="9" r="6.500" stroke="#1a80f0" strokeWidth="1.600" />
              <path d="M15 6v6m-3-3h6m-5-2 4 4m-4 0 4-4M1 1l5 5m-5 0 5-5M3.500 0v7M0 3.500h7M6 18l5 5m-5 0 5-5M8.500 17v7M5 20.500h7" stroke="#f03c3c" strokeWidth="1.200" />
              <path d="M17 13v9l2-2 2 3.500 1.500-1L21 19h3Z" fill="#fff" stroke="#111" />
            </Pic>
          </button>
          <button aria-label="旋转平面" className="flex size-8 items-center justify-center">
            <Pic className="size-[26px]">
              <path d="M4 22h14l5-5" stroke="#bbb" strokeWidth="1.500" />
              <path d="M2 11 15 8l6 10-15 3Z" fill="#d4ecfa" stroke="#7ea8cc" />
              <path d="M10 8c2-4 5-5 7-4l1.500-2 4 1.500.5 6.500-7-2 1.500-1.500c-2-1-4-1-5 1Z" fill="#333" />
              <Node x={2} y={12} />
              <Node x={6} y={21} />
            </Pic>
          </button>
          <button className="flex h-[31px] w-8 items-center justify-center bg-[#0000ff] font-bold text-white">L</button>
          <button aria-label="线型" className="flex size-7 items-center justify-center">
            <svg viewBox="0 0 20 4" className="h-1 w-5" aria-hidden="true"><path d="M1 1.500h6m3 0h10" stroke="#111" /></svg>
          </button>
        </div>
      </Group>
    </div>
  );
}

export default function App() {
  return (
    <div className="h-screen bg-[#f4f4f4] px-[7px] pb-[7px] font-['Noto_Sans','Noto_Sans_CJK_SC',sans-serif] text-[12px] leading-4 text-black">
      <SharedPaints />
      <div className="flex h-full flex-col border border-[#6e6e6e] bg-[#f0f0f0] shadow-[0_1px_8px_#00000066]">
        <TitleBar />
        <MenuBar />
        <MainToolbar />

        <div className="flex min-h-0 flex-1 border-y border-[#8c8f96]">
          <aside aria-label="绘图工具" className="flex w-[35px] shrink-0 flex-col items-center border-r border-[#a0a0a0]">
            <Grip vertical={false} />
            {drawTools.map((t) => (
              <button key={t.name} aria-label={t.name} className="relative flex h-[30px] w-[34px] items-center justify-center">
                <Pic>{t.art}</Pic>
                <svg viewBox="0 0 4 4" className="absolute right-[2px] bottom-[2px] size-1" aria-hidden="true"><path d="M4 0v4H0Z" fill="#777" /></svg>
              </button>
            ))}
          </aside>

          <section className="flex w-[285px] shrink-0 flex-col gap-[5px] pt-[2px] pr-[9px] pb-[3px] pl-[3px]">
            <div className="flex-1 border border-[#828790] bg-white">
              <LayerList />
            </div>
            <div className="flex-1 border border-[#828790] bg-white" />
          </section>

          <Viewport />

          <aside aria-label="曲面工具" className="flex w-9 shrink-0 flex-col items-center border-l border-[#8c8f96]">
            <Grip vertical={false} />
            {faceTools.map((t) => (
              <ToolButton key={t.name} name={t.name} on={t.on}>
                <Pic className="size-[22px]">{t.art}</Pic>
              </ToolButton>
            ))}
          </aside>
        </div>

        <CommandBar />
        <footer className="flex h-[27px] shrink-0">
          <p className="flex flex-1 items-center border-r border-[#d8d8d8] bg-[#ffeda9] px-[2px] text-[13px] font-bold">WORKNC</p>
          <span className="flex w-[18px] items-end justify-end p-[2px]">
            <svg viewBox="0 0 9 9" className="size-[9px]" aria-hidden="true">
              <path d="M6 0h2v2H6ZM3 3h2v2H3ZM6 3h2v2H6ZM0 6h2v2H0ZM3 6h2v2H3ZM6 6h2v2H6Z" fill="#bbb" />
            </svg>
          </span>
        </footer>
      </div>
    </div>
  );
}
